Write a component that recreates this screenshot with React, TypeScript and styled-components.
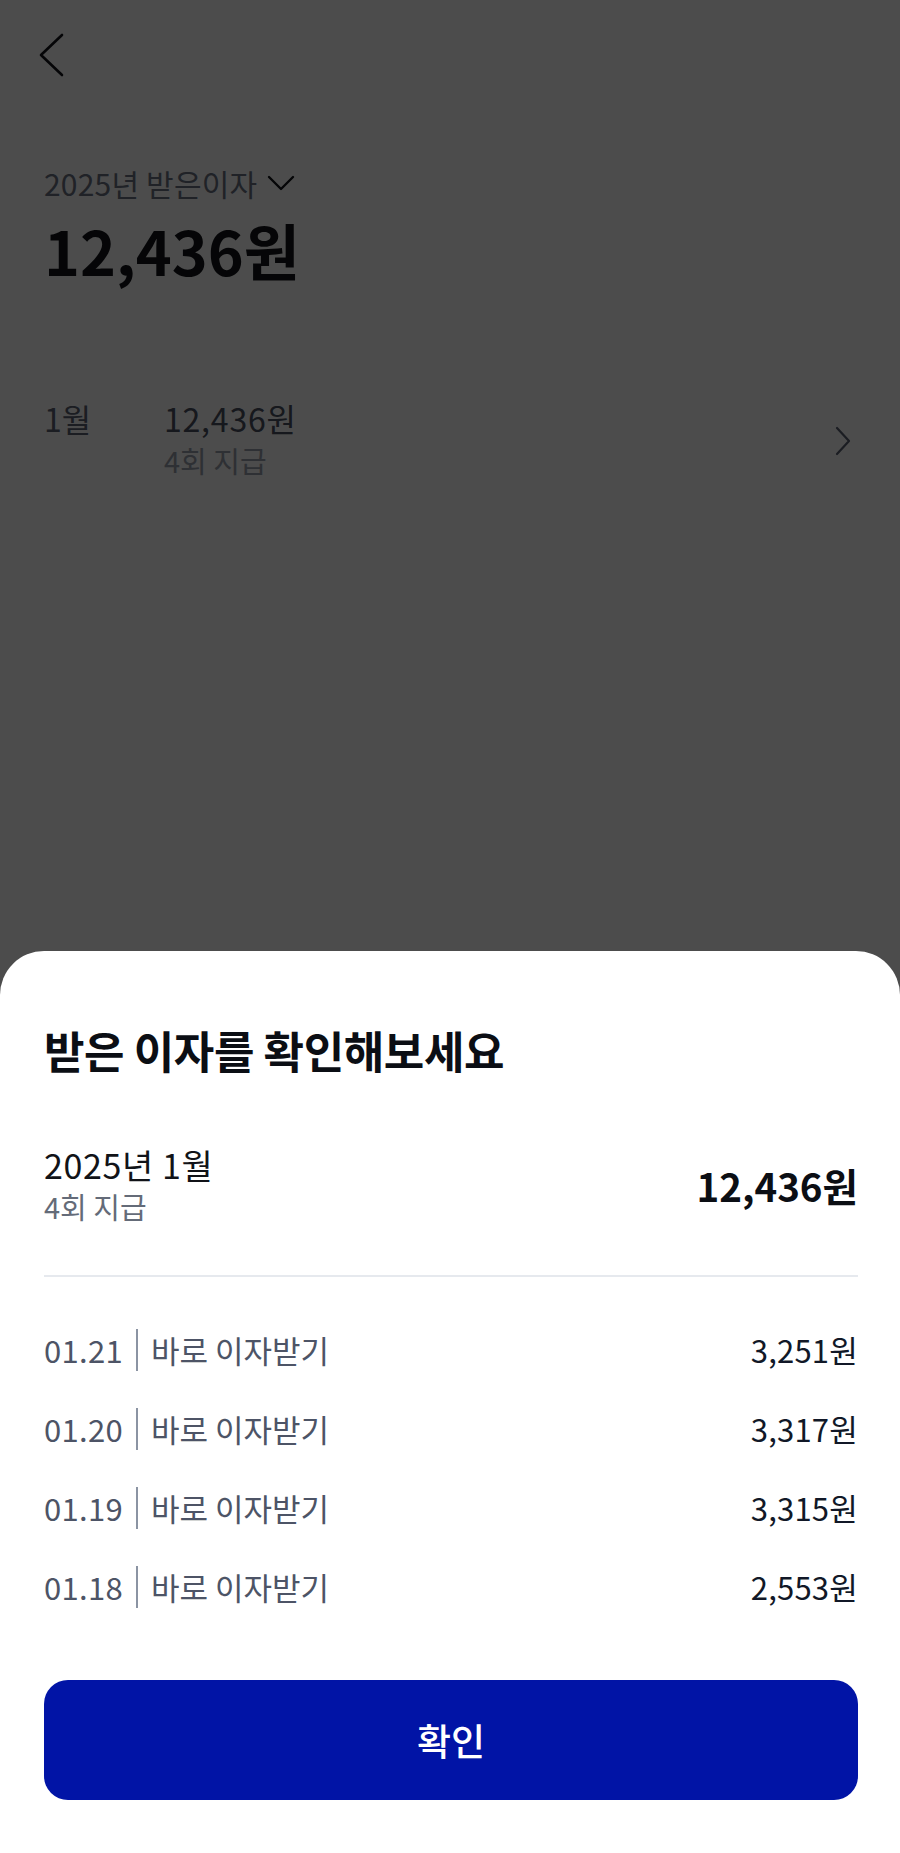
import { createGlobalStyle } from 'styled-components'
import styled from 'styled-components'

const GlobalStyle = createGlobalStyle`
  html, body {
    margin: 0;
    padding: 0;
    background: #ffffff;
  }
  body {
    font-family: 'Noto Sans CJK KR', 'Noto Sans', 'Liberation Sans', sans-serif;
    -webkit-font-smoothing: antialiased;
  }
  * {
    box-sizing: border-box;
  }
`

const Screen = styled.div`
  position: relative;
  width: 900px;
  height: 1853px;
  overflow: hidden;
  background: #ffffff;
`

const Page = styled.main`
  display: flex;
  flex-direction: column;
  padding: 0 44px;
`

const Header = styled.header`
  height: 110px;
  display: flex;
  align-items: flex-start;
  padding-top: 33px;
  margin-left: -7px;
`

const IconButton = styled.button`
  display: flex;
  padding: 0;
  border: none;
  background: none;
  color: #111318;
  cursor: pointer;
`

const YearPicker = styled.button`
  margin-top: 55px;
  display: flex;
  align-items: center;
  gap: 9px;
  padding: 0;
  border: none;
  background: none;
  font-family: inherit;
  font-size: 30px;
  line-height: 36px;
  letter-spacing: 0.2px;
  color: #6b7384;
  cursor: pointer;
`

const TotalAmount = styled.h1`
  margin: 13px 0 0;
  font-size: 61px;
  line-height: 72px;
  font-weight: 700;
  letter-spacing: 0;
  color: #111318;
`

const MonthRow = styled.div`
  margin-top: 112px;
  display: flex;
  align-items: center;
`

const MonthLabel = styled.div`
  align-self: flex-start;
  width: 120px;
  font-size: 32px;
  line-height: 40px;
  color: #5a6173;
`

const MonthInfo = styled.div`
  flex: 1;
  display: flex;
  flex-direction: column;
`

const MonthAmount = styled.div`
  font-size: 32px;
  line-height: 40px;
  color: #4a5061;
  letter-spacing: 0.8px;
`

const MonthCount = styled.div`
  font-size: 29px;
  line-height: 45px;
  color: #9aa1ad;
`

const Backdrop = styled.div`
  position: absolute;
  inset: 0;
  background: rgba(0, 0, 0, 0.7);
`

const Sheet = styled.section`
  position: absolute;
  left: 0;
  right: 0;
  bottom: 0;
  height: 902px;
  display: flex;
  flex-direction: column;
  padding: 73px 42px 53px 44px;
  background: #ffffff;
  border-radius: 44px 44px 0 0;
`

const SheetTitle = styled.h2`
  margin: 0;
  font-size: 44px;
  line-height: 52px;
  font-weight: 700;
  letter-spacing: -0.4px;
  color: #0b0e14;
`

const Summary = styled.div`
  margin-top: 68px;
  display: flex;
  align-items: center;
  justify-content: space-between;
`

const SummaryPeriod = styled.div`
  font-size: 34px;
  line-height: 42px;
  font-weight: 400;
  letter-spacing: 0.6px;
  color: #111318;
`

const SummaryCount = styled.div`
  font-size: 29px;
  line-height: 40px;
  color: #646b78;
`

const SummaryAmount = styled.div`
  font-size: 38.5px;
  line-height: 48px;
  font-weight: 700;
  letter-spacing: 0;
  color: #0b0e14;
`

const Divider = styled.hr`
  margin: 49px 0 33px;
  height: 2px;
  border: none;
  background: #e6e9ee;
`

const PaymentList = styled.ul`
  margin: 0;
  padding: 0;
  list-style: none;
`

const PaymentItem = styled.li`
  height: 79px;
  display: flex;
  align-items: center;
  justify-content: space-between;
`

const PaymentLabel = styled.div`
  display: flex;
  align-items: center;
  font-size: 31px;
  line-height: 40px;
  color: #4d5466;
`

const PaymentDate = styled.span`
  font-size: 31px;
  letter-spacing: 0.3px;
`

const Bar = styled.span`
  width: 2px;
  height: 42px;
  margin: 0 13px 0 13px;
  background: #8b94a3;
`

const PaymentAmount = styled.div`
  font-size: 31px;
  line-height: 40px;
  letter-spacing: 0.2px;
  color: #111827;
`

const ConfirmButton = styled.button`
  margin-top: auto;
  height: 120px;
  width: 100%;
  border: none;
  border-radius: 24px;
  background: #0114a6;
  color: #ffffff;
  font-family: inherit;
  font-size: 37px;
  font-weight: 500;
  cursor: pointer;
`

const payments = [
  { date: '01.21', amount: '3,251원' },
  { date: '01.20', amount: '3,317원' },
  { date: '01.19', amount: '3,315원' },
  { date: '01.18', amount: '2,553원' },
]

export default function App() {
  return (
    <Screen>
      <GlobalStyle />
      <Page>
        <Header>
          <IconButton aria-label="뒤로">
            <svg width="28" height="44" viewBox="0 0 28 44" fill="none">
              <path d="M25 2 L4 22 L25 42" stroke="currentColor" strokeWidth="2.6" strokeLinecap="round" strokeLinejoin="round" />
            </svg>
          </IconButton>
        </Header>
        <YearPicker>
          2025년 받은이자
          <svg width="30" height="18" viewBox="0 0 30 18" fill="none">
            <path d="M3 3 L15 15 L27 3" stroke="#111318" strokeWidth="2.4" strokeLinecap="round" strokeLinejoin="round" />
          </svg>
        </YearPicker>
        <TotalAmount>12,436원</TotalAmount>
        <MonthRow>
          <MonthLabel>1월</MonthLabel>
          <MonthInfo>
            <MonthAmount>12,436원</MonthAmount>
            <MonthCount>4회 지급</MonthCount>
          </MonthInfo>
          <svg width="18" height="30" viewBox="0 0 18 30" fill="none" style={{ marginRight: 4 }}>
            <path d="M3 2 L15 15 L3 28" stroke="#5a6173" strokeWidth="2.2" strokeLinecap="round" strokeLinejoin="round" />
          </svg>
        </MonthRow>
      </Page>
      <Backdrop />
      <Sheet>
        <SheetTitle>받은 이자를 확인해보세요</SheetTitle>
        <Summary>
          <div>
            <SummaryPeriod>2025년 1월</SummaryPeriod>
            <SummaryCount>4회 지급</SummaryCount>
          </div>
          <SummaryAmount>12,436원</SummaryAmount>
        </Summary>
        <Divider />
        <PaymentList>
          {payments.map((p) => (
            <PaymentItem key={p.date}>
              <PaymentLabel>
                <PaymentDate>{p.date}</PaymentDate>
                <Bar />
                바로 이자받기
              </PaymentLabel>
              <PaymentAmount>{p.amount}</PaymentAmount>
            </PaymentItem>
          ))}
        </PaymentList>
        <ConfirmButton>확인</ConfirmButton>
      </Sheet>
    </Screen>
  )
}
